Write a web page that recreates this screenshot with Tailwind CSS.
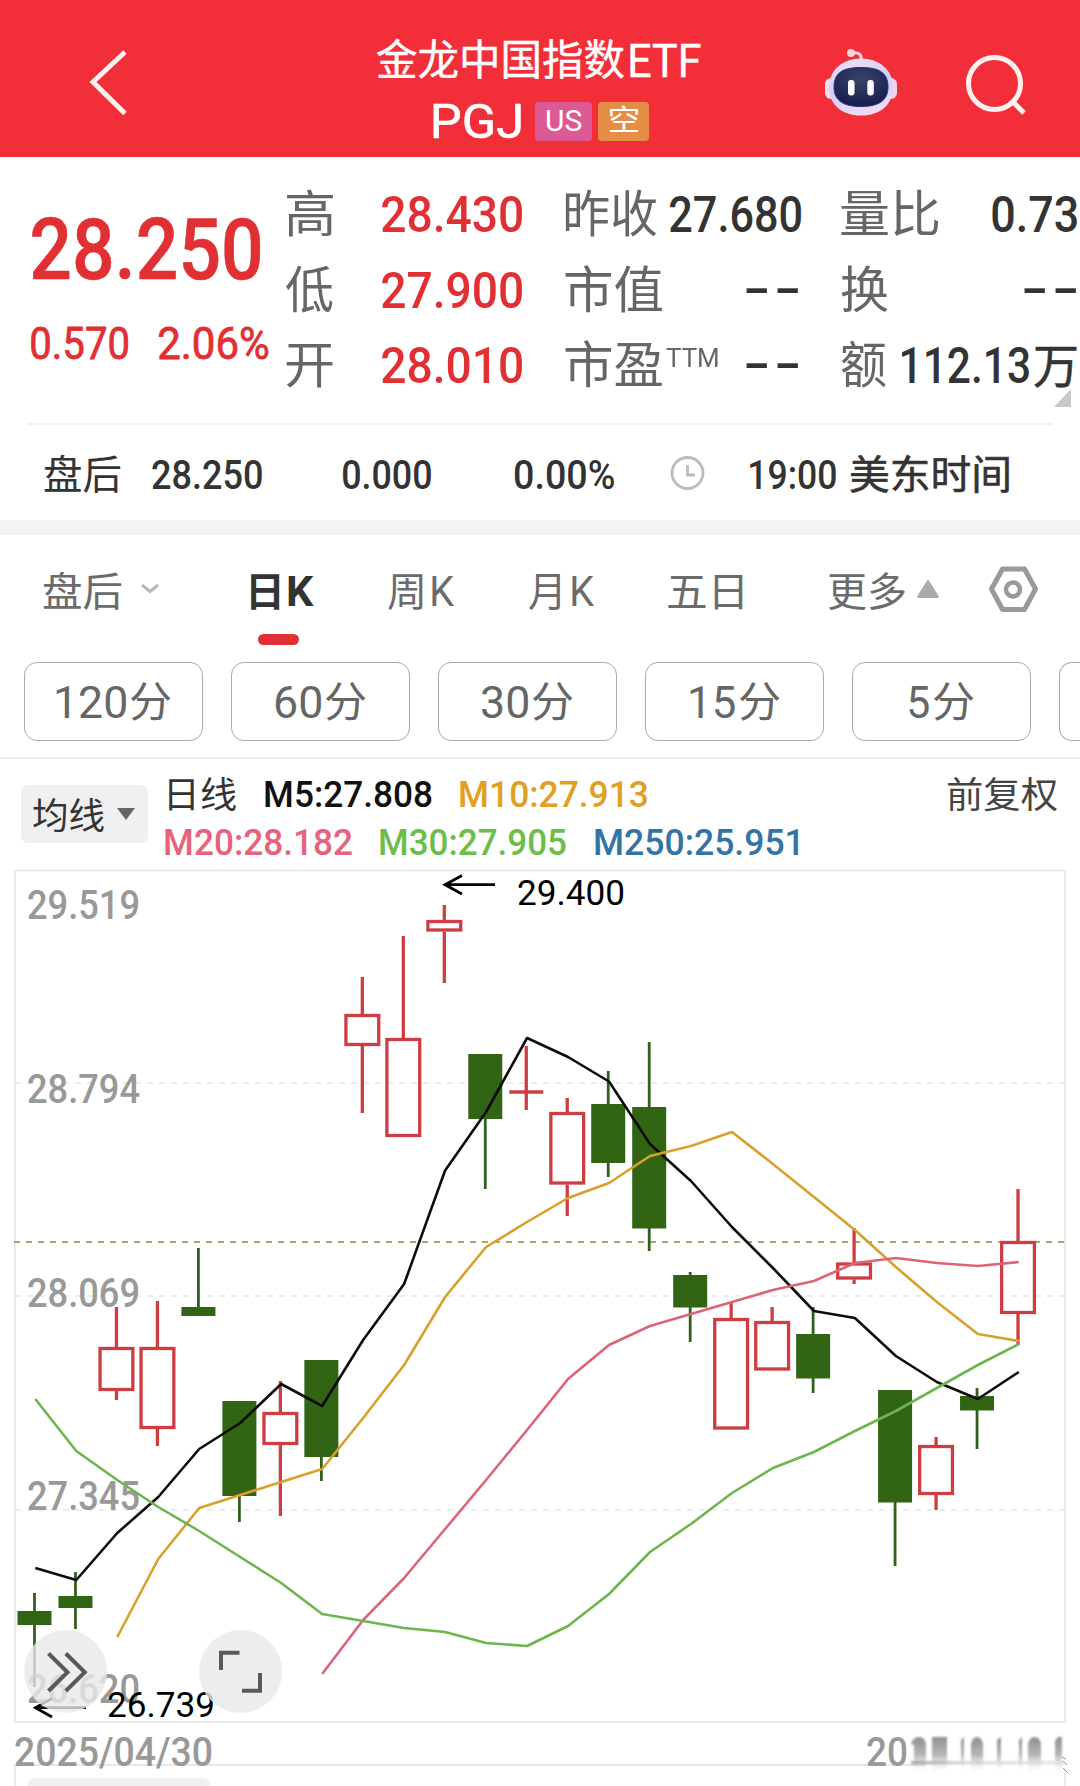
<!DOCTYPE html>
<html lang="zh-CN">
<head>
<meta charset="utf-8">
<title>金龙中国指数ETF</title>
<script src="https://cdn.jsdelivr.net/npm/@tailwindcss/browser@4"></script>
</head>
<body class="w-[1080px] h-[1786px] overflow-hidden bg-white font-['Roboto','Noto_Sans_CJK_SC',sans-serif] text-[#333]">

<!-- Header -->
<header class="h-[157px] bg-[#f22f38] flex text-white">
  <svg class="w-[377px] h-[157px] shrink-0" viewBox="0 0 377 157" fill="none" stroke="#fff0ef" stroke-width="5"><path d="M125 52 93 82 125 113.500"/></svg>
  <div class="w-[325px] shrink-0 pt-[36px]">
    <div class="flex items-center h-[50px] leading-[50px] [-webkit-text-stroke:0.4px]">
      <div data-fit class="w-[247px] text-[42px]">金龙中国指数</div>
      <div data-fit class="ml-[6px] w-[71px] text-[46px]">ETF</div>
    </div>
    <div class="flex items-center h-[76px] pl-[57px] -mt-[3px]">
      <div data-fit class="w-[87px] text-[49px] leading-[53px] [-webkit-text-stroke:0.6px]">PGJ</div>
      <div class="ml-[14px] w-[57px] h-[39px] rounded-[4px] bg-[#dc5a94] flex justify-center items-center"><div data-fit class="w-[36px] text-[29px] leading-[39px]">US</div></div>
      <div class="ml-[6px] w-[51px] h-[39px] rounded-[4px] bg-[#e58d45] flex justify-center items-center shrink-0"><div data-fit class="w-[28px] text-[29px] leading-[39px]">空</div></div>
    </div>
  </div>
  <svg class="w-[378px] h-[157px] shrink-0" viewBox="702 0 378 157" fill="none">
    <defs>
      <linearGradient id="shell" x1="0" y1="0" x2="0.4" y2="1"><stop offset="0" stop-color="#f4e4f4"/><stop offset=".55" stop-color="#d3cdf5"/><stop offset="1" stop-color="#eadcf6"/></linearGradient>
      <radialGradient id="face" cx=".5" cy=".3" r=".7"><stop offset="0" stop-color="#39456c"/><stop offset="1" stop-color="#171d4c"/></radialGradient>
    </defs>
    <path d="M852 53q10-2 9.500 8" stroke="#fbd3dc" stroke-width="3"/>
    <circle cx="851" cy="53" r="4" fill="#fbd3dc"/>
    <rect x="825" y="78" width="12" height="21" rx="6" fill="#f3dcf0"/>
    <rect x="885" y="78" width="12" height="21" rx="6" fill="#f0d3ee"/>
    <path d="M861 58.500C879 58.500 893 70 893 87C893 105 880 115.500 861 115.500C842 115.500 829 105 829 87C829 70 843 58.500 861 58.500Z" fill="url(#shell)"/>
    <path d="M861 67.500C878 67.500 888 72 888 87C888 101 878 106.500 861 106.500C844 106.500 834 101 834 87C834 72 844 67.500 861 67.500Z" fill="url(#face)" stroke="#2a2f86" stroke-width="1"/>
    <rect x="848" y="80" width="6.500" height="15.500" rx="3" fill="#fff"/>
    <rect x="867.300" y="80" width="6.500" height="15.500" rx="3" fill="#fff"/>
    <g stroke="#fff0ef" stroke-width="5"><circle cx="994.500" cy="83.500" r="26"/><path d="M1013 102 1024 113"/></g>
  </svg>
</header>

<!-- Quote -->
<section class="h-[266px] flex relative">
  <div class="w-[286px] shrink-0 pl-[32px] pt-[53px] text-[#e13033] font-medium">
    <div data-fit class="w-[228px] h-[80px] leading-[80px] text-[85px] [-webkit-text-stroke:0.6px]">28.250</div>
    <div class="flex mt-[29px] h-[50px] leading-[50px] text-[45px] font-normal">
      <div data-fit class="-ml-[1px] w-[97px] [-webkit-text-stroke:0.8px]">0.570</div>
      <div data-fit class="ml-[31px] w-[109px] [-webkit-text-stroke:0.8px]">2.06%</div>
    </div>
  </div>
  <div class="w-[794px] shrink-0 pt-[21px] text-[50px] leading-[75px]">
    <div class="flex h-[75.500px]">
      <div data-fit class="w-[47px] text-[#666]">高</div>
      <div data-fit class="ml-[49px] w-[140px] text-[#e13033] font-medium">28.430</div>
      <div data-fit class="ml-[43px] w-[92px] text-[#666]">昨收</div>
      <div data-fit class="ml-[13px] w-[131px] font-medium">27.680</div>
      <div data-fit class="ml-[40px] w-[98px] text-[#666]">量比</div>
      <div data-fit class="ml-[53px] w-[85px] font-medium">0.73</div>
    </div>
    <div class="flex h-[75.500px]">
      <div data-fit class="w-[47px] text-[#666]">低</div>
      <div data-fit class="ml-[49px] w-[140px] text-[#e13033] font-medium">27.900</div>
      <div data-fit class="ml-[43px] w-[97px] text-[#666]">市值</div>
      <div class="ml-[83px] w-[53px] flex gap-[9px] shrink-0 font-medium -mt-[2px]"><div data-fit class="w-[22px]">-</div><div data-fit class="w-[22px]">-</div></div>
      <div data-fit class="ml-[43px] w-[47px] text-[#666]">换</div>
      <div class="ml-[135px] w-[53px] flex gap-[9px] shrink-0 font-medium -mt-[2px]"><div data-fit class="w-[22px]">-</div><div data-fit class="w-[22px]">-</div></div>
    </div>
    <div class="flex h-[75.500px]">
      <div data-fit class="w-[47px] text-[#666]">开</div>
      <div data-fit class="ml-[49px] w-[140px] text-[#e13033] font-medium">28.010</div>
      <div data-fit class="ml-[43px] w-[97px] text-[#666]">市盈</div>
      <div data-fit class="ml-[4px] w-[52px] text-[26px] leading-[59px] text-[#666]">TTM</div>
      <div class="ml-[27px] w-[53px] flex gap-[9px] shrink-0 font-medium -mt-[2px]"><div data-fit class="w-[22px]">-</div><div data-fit class="w-[22px]">-</div></div>
      <div data-fit class="ml-[43px] w-[45px] text-[#666]">额</div>
      <div data-fit class="ml-[16px] w-[127px] font-medium">112.13</div>
      <div data-fit class="ml-[5px] w-[43px] text-[47px] [-webkit-text-stroke:0.6px]">万</div>
    </div>
  </div>
  <svg class="absolute left-[1054px] top-[232px] w-[17px] h-[18px]" viewBox="0 0 17 18"><path d="M17 0V18H0Z" fill="#c8c8c8"/></svg>
</section>

<!-- After-hours -->
<section class="h-[97px] mx-[28px] border-t-2 border-[#f1f1f1] flex items-center pl-[16px] pt-[7px] leading-[50px] text-[40px]">
  <div data-fit class="w-[77px]">盘后</div>
  <div data-fit class="ml-[31px] w-[110px] font-medium">28.250</div>
  <div data-fit class="ml-[81px] w-[88px] font-medium">0.000</div>
  <div data-fit class="ml-[84px] w-[99px] font-medium">0.00%</div>
  <svg class="ml-[56px] w-[35px] h-[36px] -mt-[7px] shrink-0" viewBox="0 0 35 36" fill="none" stroke="#bbb" stroke-width="2.800"><circle cx="17.500" cy="18" r="15.500"/><path d="M17.500 10V20H25"/></svg>
  <div data-fit class="ml-[45px] w-[86px] font-medium">19:00</div>
  <div data-fit class="ml-[14px] w-[159px] [-webkit-text-stroke:0.6px]">美东时间</div>
</section>
<div class="h-[15px] bg-[#f3f3f3]"></div>

<!-- Period tabs -->
<nav class="h-[113px] flex pl-[43px] text-[#6b6b6b] text-[40px] leading-[116px] relative">
  <div data-fit class="w-[79px]">盘后</div>
  <svg class="ml-[19px] w-[18px] h-[113px] shrink-0" viewBox="0 0 18 113" fill="none" stroke="#b9b9b9" stroke-width="3"><path d="M1 50 9 56.500 17 50"/></svg>
  <div class="ml-[92px] w-[64px] flex text-[#333] font-bold shrink-0"><div data-fit class="w-[29px]">日</div><div data-fit class="ml-[8px] w-[26px] text-[43px] leading-[113px]">K</div></div>
  <div class="ml-[73px] w-[66px] flex shrink-0"><div data-fit class="w-[35px]">周</div><div data-fit class="ml-[9px] w-[22px] text-[43px] leading-[113px]">K</div></div>
  <div class="ml-[75px] w-[65px] flex shrink-0"><div data-fit class="w-[31px]">月</div><div data-fit class="ml-[12px] w-[22px] text-[43px] leading-[113px]">K</div></div>
  <div data-fit class="ml-[74px] w-[75px]">五日</div>
  <div data-fit class="ml-[85px] w-[77px]">更多</div>
  <svg class="ml-[12px] w-[22px] h-[113px] shrink-0" viewBox="0 0 22 113" fill="#aaa"><path d="M9.800 46q1.200-2 2.400 0L21.600 61q.8 2-1 2H1.400q-1.800 0-1-2Z"/></svg>
  <svg class="ml-[48px] w-[52px] h-[113px] shrink-0" viewBox="0 0 52 113" fill="none" stroke="#999" stroke-linejoin="round"><path d="M15.500 34H37.500L48.500 54 37.500 74.500H15.500L4.500 54Z" stroke-width="5"/><circle cx="26" cy="54.500" r="7" stroke-width="4.500"/></svg>
  <div class="absolute left-[258px] top-[99px] w-[41px] h-[11px] rounded-full bg-[#e13033]"></div>
</nav>

<!-- Minute chips -->
<div class="h-[111px] pl-[24px] pt-[14px] flex gap-[28px] overflow-hidden border-b-2 border-[#efefef] text-[#666] text-[45px] leading-[80px]">
  <div class="w-[179px] h-[79px] shrink-0 rounded-[13px] border-[1.500px] border-[#aaa] flex justify-center"><div data-fit class="w-[70px]">120</div><div data-fit class="ml-[4px] w-[41px] text-[42px]">分</div></div>
  <div class="w-[179px] h-[79px] shrink-0 rounded-[13px] border-[1.500px] border-[#aaa] flex justify-center"><div data-fit class="w-[46px]">60</div><div data-fit class="ml-[4px] w-[41px] text-[42px]">分</div></div>
  <div class="w-[179px] h-[79px] shrink-0 rounded-[13px] border-[1.500px] border-[#aaa] flex justify-center"><div data-fit class="w-[46px]">30</div><div data-fit class="ml-[4px] w-[41px] text-[42px]">分</div></div>
  <div class="w-[179px] h-[79px] shrink-0 rounded-[13px] border-[1.500px] border-[#aaa] flex justify-center"><div data-fit class="w-[45px]">15</div><div data-fit class="ml-[4px] w-[41px] text-[42px]">分</div></div>
  <div class="w-[179px] h-[79px] shrink-0 rounded-[13px] border-[1.500px] border-[#aaa] flex justify-center"><div data-fit class="w-[20px]">5</div><div data-fit class="ml-[4px] w-[41px] text-[42px]">分</div></div>
  <div class="w-[21px] h-[79px] shrink-0 rounded-l-[13px] border-[1.500px] border-r-0 border-[#aaa]"></div>
</div>

<!-- Moving average legend -->
<section class="h-[110px] flex pl-[21px] text-[37px] leading-[48px]">
  <div class="mt-[26px] w-[127px] h-[58px] shrink-0 rounded-[7px] bg-[#f0f0f0] flex items-center pl-[12px]">
    <div data-fit class="w-[71px] text-[36px] mt-[5px]">均线</div>
    <svg class="ml-[13px] w-[18px] h-[12px] shrink-0" viewBox="0 0 18 12"><path d="M0 0H18L9 12Z" fill="#666"/></svg>
  </div>
  <div class="ml-[17px] w-[782px] shrink-0 pt-[12px] font-medium">
    <div class="flex pl-[4px] h-[48px]">
      <div data-fit class="w-[67px] text-[36px] font-normal mt-[1px]">日线</div>
      <div data-fit class="ml-[29px] w-[167px] text-[#111]">M5:27.808</div>
      <div data-fit class="ml-[28px] w-[187px] text-[#e0a021]">M10:27.913</div>
    </div>
    <div class="flex h-[48px]">
      <div data-fit class="w-[187px] text-[#e5637d]">M20:28.182</div>
      <div data-fit class="ml-[28px] w-[186px] text-[#6cbd4a]">M30:27.905</div>
      <div data-fit class="ml-[29px] w-[203px] text-[#3373a6]">M250:25.951</div>
    </div>
  </div>
  <div data-fit class="mt-[13px] w-[110px] text-[36px] text-[#444]">前复权</div>
</section>

<!-- Candlestick chart: coordinates are page pixels -->
<svg id="chart" class="block w-[1080px] h-[917px] font-['Roboto',sans-serif]" viewBox="0 869 1080 917" fill="none">
  <g stroke="#e8e8e8" stroke-width="1.800">
    <rect x="14.800" y="870.500" width="1050.400" height="851.500"/>
    <path d="M14.800 1786V1765H1065.200V1786"/>
    <path d="M15 1083H1065M15 1296H1065M15 1510H1065" stroke-width="1.500" stroke-dasharray="6 6"/>
  </g>
  <rect x="27.500" y="1778" width="183" height="20" rx="8" fill="#f0f0f0"/>
  <path d="M14 1242H1065" stroke="#aaa56c" stroke-width="2" stroke-dasharray="6 6"/>
  <g fill="#999" font-size="41" font-weight="500">
    <text x="27" y="918.500" textLength="113" lengthAdjust="spacingAndGlyphs">29.519</text>
    <text x="27" y="1102.500" textLength="113" lengthAdjust="spacingAndGlyphs">28.794</text>
    <text x="27" y="1306.500" textLength="113" lengthAdjust="spacingAndGlyphs">28.069</text>
    <text x="27" y="1509.500" textLength="113" lengthAdjust="spacingAndGlyphs">27.345</text>
    <text x="27" y="1703" textLength="113" lengthAdjust="spacingAndGlyphs">26.620</text>
    <text x="14" y="1766" textLength="199" lengthAdjust="spacingAndGlyphs">2025/04/30</text>
    <text x="866" y="1766" textLength="42" lengthAdjust="spacingAndGlyphs">20</text>
  </g>
  <g id="candles"></g>
  <g id="averages" stroke-width="2.600" stroke-linejoin="round"></g>
  <g fill="#000" font-size="34.500">
    <text x="517" y="905" textLength="108" lengthAdjust="spacingAndGlyphs">29.400</text>
    <text x="107" y="1717" textLength="108" lengthAdjust="spacingAndGlyphs">26.739</text>
  </g>
  <g stroke="#000" stroke-width="2.800">
    <path d="M495 884.700H445M462 875.500 445 884.700 462 894"/>
    <path d="M86 1707.700H35.500M52 1698.500 35.500 1707.700 52 1717"/>
  </g>
  <g fill="#e8e8e8" fill-opacity=".8"><circle cx="65.700" cy="1671.500" r="41.500"/><circle cx="240.500" cy="1671.500" r="41.500"/></g>
  <g stroke="#595959" stroke-width="4">
    <path d="M48.500 1653.500 67.500 1672.200 48.500 1691M65.800 1653.500 84.800 1672.200 65.800 1691"/>
    <path d="M221 1670V1652.800H239.500M260 1673V1690.800H242"/>
  </g>
  <!-- Smeared end of the right-hand date -->
  <defs>
    <linearGradient id="smear" x1="0" y1="0" x2="0" y2="1"><stop offset="0" stop-color="#8f8f8f"/><stop offset=".5" stop-color="#b8b8b8"/><stop offset="1" stop-color="#fff" stop-opacity="0"/></linearGradient>
    <linearGradient id="band" x1="0" y1="0" x2="1" y2="0"><stop offset="0" stop-color="#888"/><stop offset=".35" stop-color="#ccc"/><stop offset="1" stop-color="#ddd"/></linearGradient>
    <filter id="soft" x="-5%" y="-20%" width="110%" height="140%"><feGaussianBlur stdDeviation="1"/></filter>
  </defs>
  <rect x="925" y="1762" width="143" height="6" fill="#fff"/>
  <g fill="url(#smear)" filter="url(#soft)">
    <path d="M911 1744q2-7 8-7t7 7V1774H914V1745Z"/><path d="M932 1737H947V1774H932Z"/>
    <path d="M961 1740 964 1737V1774H961Z"/><path d="M971 1743q2-6 6-6t6 6V1774H971Z"/>
    <path d="M997 1740 1001 1737V1774H997Z"/><path d="M1019 1740 1022 1737V1774H1019Z"/>
    <path d="M1028 1743q2-6 6.500-6t6.500 6V1774H1028Z"/><path d="M1055 1741 1058 1737H1062V1774H1055Z"/>
    <rect x="911" y="1761" width="154" height="3.500" fill="url(#band)" opacity=".7"/>
  </g>
  <path d="M1062 1757 1066 1759M1063 1761 1067 1765M1063 1768 1068 1773" stroke="#999" stroke-width="1"/>
</svg>

<script>
// Condense each label so that its inked width equals its box
const pen = document.createElement('canvas').getContext('2d');
function fitLabels() {
  document.querySelectorAll('[data-fit]').forEach(box => {
    const cs = getComputedStyle(box);
    let span = box.querySelector('span');
    if (!span) {
      span = document.createElement('span');
      span.textContent = box.textContent;
      box.textContent = '';
      box.style.flexShrink = 0;
      span.style.cssText = 'display:inline-block;white-space:nowrap;transform-origin:0 50%';
      box.append(span);
    }
    pen.font = `${cs.fontWeight} ${cs.fontSize} ${cs.fontFamily}`;
    const m = pen.measureText(span.textContent);
    const s = parseFloat(cs.width) / (m.actualBoundingBoxLeft + m.actualBoundingBoxRight);
    // an unstyled box spans the page, so only a moderate ratio is meaningful
    span.style.transform = s > 0.5 && s < 2.5 ? `translateX(${m.actualBoundingBoxLeft * s}px) scaleX(${s})` : 'none';
  });
}
fitLabels();
addEventListener('load', fitLabels);
new ResizeObserver(fitLabels).observe(document.querySelector('header'));

// [up, high, bodyTop, bodyBottom, low]
const candles = [
  [0,1593,1611,1625,1687],[0,1572,1596,1608,1629],[1,1307,1347,1391,1400],[1,1301,1347,1429,1446],[0,1248,1307,1316,1316],
  [0,1401,1401,1496,1522],[1,1381,1412,1445,1516],[0,1360,1360,1457,1481],[1,977,1014,1046,1113],[1,936,1038,1137,1137],
  [1,905,920,931.5,983],[0,1054,1054,1119,1189],[1,1046,1092,1092,1110],[1,1098,1112,1184.5,1216],[0,1071,1104,1163,1177],
  [0,1042,1107,1228.5,1251],[0,1272,1275,1307.5,1342],[1,1302,1318,1429.5,1429],[1,1307,1321,1370.5,1370],[0,1307,1334,1378.5,1393],
  [1,1228,1262.5,1279.5,1284],[0,1390,1390,1502.5,1566],[1,1437,1445,1495,1510],[0,1388,1396,1410.5,1449],[1,1189,1241,1314,1345]
];
const at = i => 34.5 + 41 * i - i * 0.02;
document.getElementById('candles').innerHTML = candles.map(([up, h, t, b, l], i) => {
  const x = at(i);
  if (!up) return `<path d="M${x} ${h}V${l}" stroke="#315f1c" stroke-width="2.8"/><rect x="${x - 17}" y="${t}" width="34" height="${b - t}" fill="#316514"/>`;
  const body = t === b ? `<path d="M${x - 17} ${t}H${x + 17}"/>` : `<rect x="${x - 16.4}" y="${t + 1.5}" width="32.8" height="${b - t - 3}"/>`;
  const wick = t === b ? `M${x} ${h}V${l}` : `M${x} ${h}V${t}` + (l > b ? `M${x} ${b}V${l}` : '');
  return `<g stroke="#cd3e43" stroke-width="3.3"><path d="${wick}"/>${body}</g>`;
}).join('');

// [colour, first index, y values]
const averages = [
  ['#0c0c0c', 0, [1568,1580,1533,1497,1449,1423,1384,1406,1340,1284,1170.5,1112,1038,1057,1081.5,1144,1181,1227,1268,1311,1318,1356,1382,1399,1372]],
  ['#d9a02c', 2, [1637,1559,1508,1495,1482,1469,1418,1365,1297,1247,1222,1198,1183,1156,1146,1132,1164,1197,1230,1267,1302,1334,1341]],
  ['#dd6377', 7, [1674,1620,1578,1529,1480,1430,1379,1345,1326,1314,1302,1290,1281,1263,1258,1263,1266,1262]],
  ['#6cb64e', 0, [1399,1451,1480,1507,1531,1557,1583,1614,1621,1628,1632,1643,1646,1626,1594,1552,1524,1493,1468,1452,1431,1411,1388,1365,1344]]
];
document.getElementById('averages').innerHTML = averages.map(([c, from, ys]) =>
  `<polyline stroke="${c}" points="${ys.map((y, k) => (at(from + k) + 0.8) + ',' + y).join(' ')}"/>`).join('');
</script>
</body>
</html>
